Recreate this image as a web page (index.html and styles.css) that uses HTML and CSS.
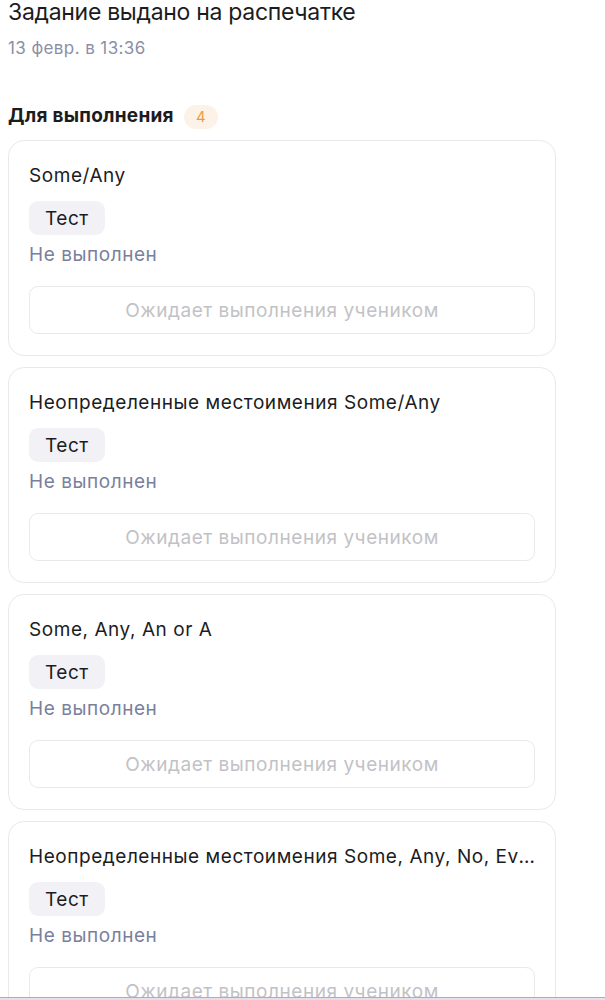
FILE: index.html
```html
<!DOCTYPE html>
<html lang="ru">
<head>
<meta charset="utf-8">
<title>Задание</title>
<link rel="stylesheet" href="styles.css">
</head>
<body>
<header class="head">
  <h1 class="head-title">Задание выдано на распечатке</h1>
  <div class="head-date">13 февр. в 13:36</div>
</header>
<section class="section">
  <div class="section-head">
    <h2 class="section-title">Для выполнения</h2>
    <span class="badge">4</span>
  </div>
  <div class="cards">
    <article class="card">
      <div class="card-title">Some/Any</div>
      <span class="tag">Тест</span>
      <div class="status">Не выполнен</div>
      <div class="wait">Ожидает выполнения учеником</div>
    </article>
    <article class="card">
      <div class="card-title">Неопределенные местоимения Some/Any</div>
      <span class="tag">Тест</span>
      <div class="status">Не выполнен</div>
      <div class="wait">Ожидает выполнения учеником</div>
    </article>
    <article class="card">
      <div class="card-title">Some, Any, An or A</div>
      <span class="tag">Тест</span>
      <div class="status">Не выполнен</div>
      <div class="wait">Ожидает выполнения учеником</div>
    </article>
    <article class="card">
      <div class="card-title">Неопределенные местоимения Some, Any, No, Every</div>
      <span class="tag">Тест</span>
      <div class="status">Не выполнен</div>
      <div class="wait">Ожидает выполнения учеником</div>
    </article>
  </div>
</section>
<div class="bottom-edge"></div>
</body>
</html>
```

FILE: styles.css
```css
* { box-sizing: border-box; }
html, body { margin: 0; padding: 0; background: #ffffff; }
body {
  font-family: Inter, "Noto Sans", "Liberation Sans", sans-serif;
  color: #1c1c1e;
  padding: 0 8px;
}
.head-title {
  margin: -2px 0 0;
  font-size: 23px;
  line-height: 28px;
  letter-spacing: -0.3px;
  font-weight: 400;
  color: #1c1c1e;
}
.head-date {
  margin-top: 12px;
  font-size: 17px;
  line-height: 20px;
  letter-spacing: 0.4px;
  color: #8a8fa6;
}
.section { margin-top: 46px; }
.section-head {
  display: flex;
  align-items: center;
  gap: 10px;
  height: 24px;
}
.section-title {
  margin: 0;
  font-size: 19px;
  line-height: 24px;
  letter-spacing: 0.25px;
  font-weight: 700;
  color: #1c1c1e;
}
.badge {
  display: inline-flex;
  align-items: center;
  justify-content: center;
  width: 34px;
  height: 24px;
  border-radius: 12px;
  background: #fdf2e8;
  color: #ee9a3c;
  font-size: 15px;
  margin-top: 1px;
}
.cards {
  margin-top: 12px;
  display: flex;
  flex-direction: column;
  gap: 11px;
  width: 548px;
}
.card {
  border: 1px solid #e9e9ed;
  border-radius: 16px;
  padding: 23px 20px 21px;
  display: flex;
  flex-direction: column;
  align-items: flex-start;
  font-size: 19px;
  letter-spacing: 0.55px;
}
.card-title {
  line-height: 24px;
  width: 100%;
  white-space: nowrap;
  overflow: hidden;
  text-overflow: ellipsis;
  color: #1c1c1e;
}
.tag {
  margin-top: 13px;
  height: 34px;
  padding: 0 16px;
  display: inline-flex;
  align-items: center;
  background: #f2f2f6;
  border-radius: 9px;
  color: #1c1c1e;
}
.status {
  margin-top: 8px;
  line-height: 24px;
  color: #7a809b;
}
.wait {
  margin-top: 19px;
  width: 100%;
  height: 48px;
  border: 1px solid #e9e9ed;
  border-radius: 9px;
  display: flex;
  align-items: center;
  justify-content: center;
  color: #c2c2c6;
}
.bottom-edge {
  position: fixed;
  left: 0;
  right: 0;
  bottom: 0;
  height: 3px;
  background: #e6dfe9;
  border-top: 1px solid #b6a8bf;
}
```
